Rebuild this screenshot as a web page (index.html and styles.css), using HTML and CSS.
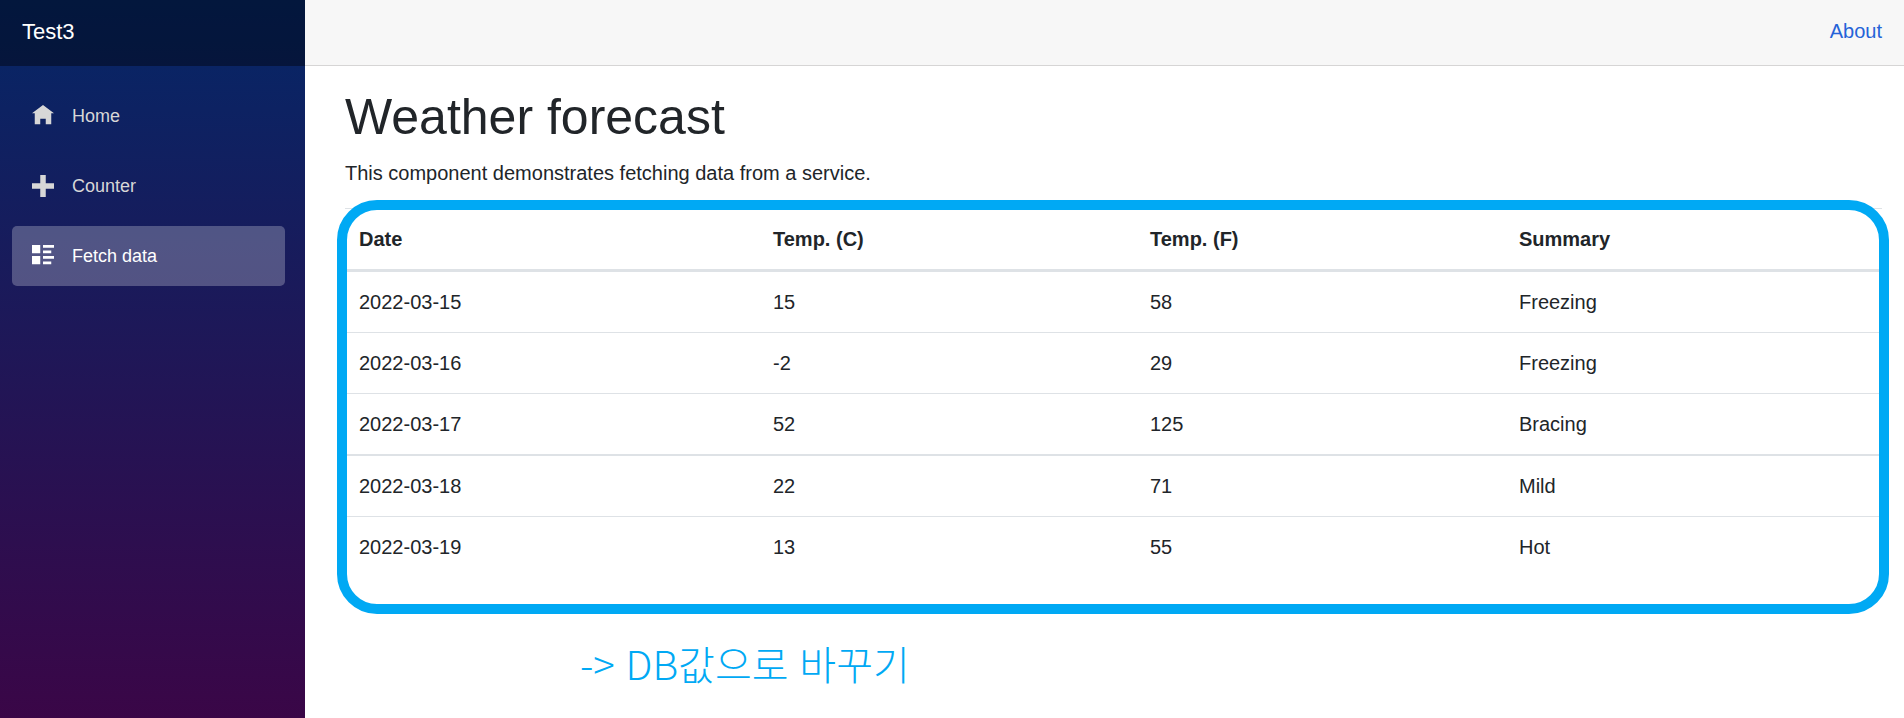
FILE: index.html
```html
<!DOCTYPE html>
<html lang="en">

<head>
    <meta charset="UTF-8">
    <title>Weather forecast</title>
    <link rel="stylesheet" href="styles.css">
</head>

<body>

    <div class="page">
        <!-- Sidebar -->
        <aside class="sidebar">
            <div class="brand">Test3</div>
            <nav class="nav">
                <a class="nav-link" href="#">
                    <svg class="nav-icon" viewBox="0 0 8 8"><path d="M4 0l-4 3h1v4h2v-2h2v2h2v-4.03l1 .03-4-3z"/></svg>
                    Home
                </a>
                <a class="nav-link" href="#">
                    <svg class="nav-icon" viewBox="0 0 8 8"><path d="M3 0v3h-3v2h3v3h2v-3h3v-2h-3v-3h-2z"/></svg>
                    Counter
                </a>
                <a class="nav-link active" href="#">
                    <svg class="nav-icon" viewBox="0 0 8 8"><path d="M0 0v3h3v-3h-3zm4 0v1h4v-1h-4zm0 2v1h3v-1h-3zm-4 2v3h3v-3h-3zm4 0v1h4v-1h-4zm0 2v1h3v-1h-3z"/></svg>
                    Fetch data
                </a>
            </nav>
        </aside>

        <main class="main">
            <div class="top-row">
                <a class="about" href="#">About</a>
            </div>

            <article class="content">
                <h1>Weather forecast</h1>
                <p>This component demonstrates fetching data from a service.</p>

                <table class="forecast">
                    <colgroup>
                        <col class="col-date">
                        <col class="col-c">
                        <col class="col-f">
                        <col>
                    </colgroup>
                    <thead>
                        <tr>
                            <th>Date</th>
                            <th>Temp. (C)</th>
                            <th>Temp. (F)</th>
                            <th>Summary</th>
                        </tr>
                    </thead>
                    <tbody>
                        <tr><td>2022-03-15</td><td>15</td><td>58</td><td>Freezing</td></tr>
                        <tr><td>2022-03-16</td><td>-2</td><td>29</td><td>Freezing</td></tr>
                        <tr class="row-thick"><td>2022-03-17</td><td>52</td><td>125</td><td>Bracing</td></tr>
                        <tr><td>2022-03-18</td><td>22</td><td>71</td><td>Mild</td></tr>
                        <tr><td>2022-03-19</td><td>13</td><td>55</td><td>Hot</td></tr>
                    </tbody>
                </table>
            </article>
        </main>
    </div>

    <!-- Annotation drawn over the screenshot -->
    <div class="callout-box"></div>
    <div class="callout-text">-&gt; DB값으로 바꾸기</div>

</body>

</html>
```

FILE: styles.css
```css
html,
body {
    height: 100%;
}

body {
    margin: 0;
    font-family: "Liberation Sans", Arial, sans-serif;
    font-size: 20px;
    line-height: 1.5;
    color: #212529;
    background-color: #fff;
    overflow: hidden;
}

.page {
    display: flex;
    height: 718px;
}

/* Sidebar */
.sidebar {
    width: 305px;
    flex-shrink: 0;
    background-image: linear-gradient(180deg, #052767 0%, #3a0647 100%);
}

.brand {
    height: 66px;
    padding-left: 22px;
    line-height: 63px;
    font-size: 22px;
    color: #fff;
    background-color: rgba(0, 0, 0, 0.4);
}

.nav {
    padding: 20px 0 0 12px;
    display: flex;
    flex-direction: column;
    gap: 10px;
}

.nav-link {
    display: flex;
    align-items: center;
    width: 273px;
    height: 60px;
    box-sizing: border-box;
    padding-left: 20px;
    font-size: 18px;
    color: #d7d7d7;
    text-decoration: none;
    border-radius: 5px;
}

.nav-link.active {
    color: #fff;
    background-color: rgba(255, 255, 255, 0.25);
}

.nav-icon {
    width: 22px;
    height: 22px;
    margin-right: 18px;
    fill: currentColor;
}

/* Main area */
.main {
    flex: 1;
    min-width: 0;
}

.top-row {
    display: flex;
    justify-content: flex-end;
    align-items: center;
    height: 65px;
    padding-right: 22px;
    background-color: #f7f7f7;
    border-bottom: 1px solid #d6d5d5;
}

.about {
    color: #2563d8;
    text-decoration: none;
    margin-top: -4px;
}

.content {
    padding: 21px 22px 0 40px;
}

h1 {
    margin: 0;
    font-size: 50px;
    font-weight: 400;
    line-height: 1.2;
}

p {
    margin: 11px 0 20px;
}

/* Forecast table */
.forecast {
    width: 100%;
    table-layout: fixed;
    border-collapse: collapse;
    border-top: 1px solid #dee2e6;
}

.col-date {
    width: 414px;
}

.col-c {
    width: 377px;
}

.col-f {
    width: 369px;
}

.forecast th,
.forecast td {
    padding: 15px 14px;
    text-align: left;
}

.forecast th {
    font-weight: 700;
    border-bottom: 3px solid #dee2e6;
}

.forecast td {
    border-bottom: 1px solid #dee2e6;
}

.forecast .row-thick td {
    border-bottom-width: 2px;
}

.forecast tbody tr:last-child td {
    border-bottom: none;
}

/* Annotation */
.callout-box {
    position: absolute;
    left: 337px;
    top: 200px;
    width: 1552px;
    height: 414px;
    box-sizing: border-box;
    border: 10px solid #00a9f4;
    border-radius: 40px;
}

.callout-text {
    position: absolute;
    left: 580px;
    top: 636px;
    font-family: "Noto Sans CJK KR", "Noto Sans", sans-serif;
    font-size: 40px;
    font-weight: 300;
    line-height: 54px;
    word-spacing: 2px;
    color: #00a9f4;
}
```
